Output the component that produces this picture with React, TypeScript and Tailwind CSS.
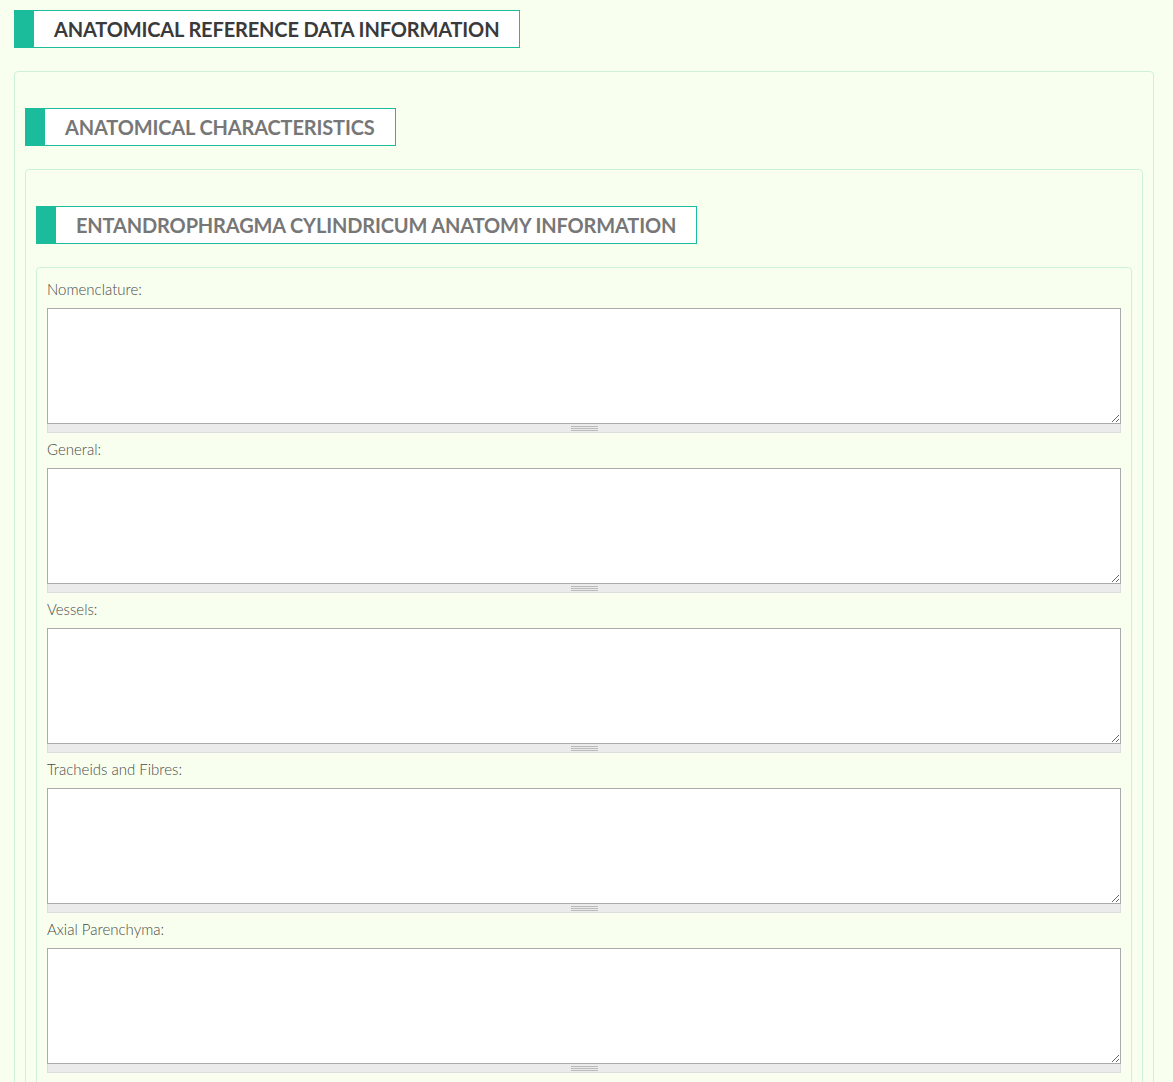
const fields = [
  "Nomenclature:",
  "General:",
  "Vessels:",
  "Tracheids and Fibres:",
  "Axial Parenchyma:",
];

const Heading = ({ title, dark }: { title: string; dark?: boolean }) => (
  <div className="flex h-[38px] w-fit items-stretch border border-[#1abc9c] bg-white">
    <div className="w-[19px] bg-[#1abc9c]" />
    <h2
      className={`flex items-center px-5 text-[20px] leading-none font-bold tracking-[-0.15px] ${
        dark ? "text-[#3a3a3a]" : "text-[#777]"
      }`}
    >
      {title}
    </h2>
  </div>
);

const Field = ({ label }: { label: string }) => (
  <div className="mb-[6px]">
    <label className="mb-[9px] block h-5 text-[15px] leading-5 font-light text-[#4a4a4a]">
      {label}
    </label>
    <textarea className="block h-[116px] w-full resize-y border border-[#aaa] bg-white outline-none" />
    <div className="flex h-[9px] items-center justify-center border-x border-b border-[#ddd] bg-[#ebebeb]">
      <div className="flex w-[27px] flex-col gap-px">
        <div className="h-px bg-[#bbb]" />
        <div className="h-px bg-[#bbb]" />
        <div className="h-px bg-[#bbb]" />
      </div>
    </div>
  </div>
);

export default function App() {
  return (
    <div
      className="min-h-screen bg-[#f9ffef] pt-[10px] pr-[19px] pl-[14px]"
      style={{ fontFamily: "Lato, 'Open Sans', sans-serif" }}
    >
      <Heading title="ANATOMICAL REFERENCE DATA INFORMATION" dark />

      <div className="mt-[23px] rounded-sm border border-[#cdf2da] px-[10px] pt-[36px] pb-[10px]">
        <Heading title="ANATOMICAL CHARACTERISTICS" />

        <div className="mt-[23px] rounded-sm border border-[#cdf2da] px-[10px] pt-[36px] pb-[10px]">
          <Heading title="ENTANDROPHRAGMA CYLINDRICUM ANATOMY INFORMATION" />

          <div className="mt-[23px] rounded-sm border border-[#cdf2da] px-[10px] pt-[11px] pb-[10px]">
            {fields.map((f) => (
              <Field key={f} label={f} />
            ))}
          </div>
        </div>
      </div>
    </div>
  );
}
